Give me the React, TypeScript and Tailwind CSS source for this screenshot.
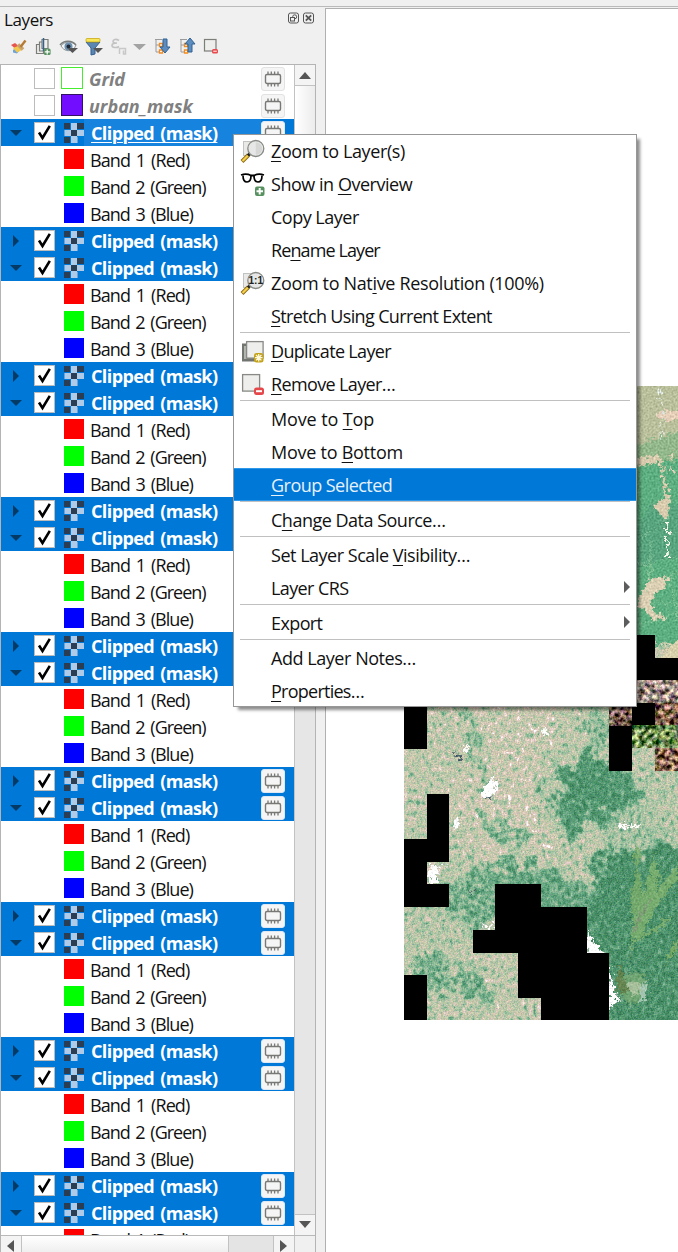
import React from "react";

function MemoryBadge({ plain = false }: { plain?: boolean }) {
  return (
    <span
      className={
        plain
          ? "flex h-6 w-6 items-center justify-center rounded-[3px] border border-[#e2e2e2] bg-[#f5f5f5]"
          : "flex h-6 w-6 items-center justify-center rounded-[3px] border border-[#dce9f5] bg-[#f5f5f5]"
      }
    >
      <svg width="18" height="18" viewBox="0 0 18 18" fill="none" stroke="#777975">
        <rect x="1.5" y="4.5" width="15" height="9" rx="1.5" strokeWidth="1.4" />
        <path d="M4 1.5v3M7.3 1.5v3M10.6 1.5v3M14 1.5v3M4 13.5v3M7.3 13.5v3M10.6 13.5v3M14 13.5v3" strokeWidth="1.3" />
      </svg>
    </span>
  );
}

function RasterIcon() {
  return (
    <svg width="20" height="20" viewBox="0 0 20 20" shapeRendering="crispEdges">
      <path fill="#b0cbe8" d="M7 0h6v7h7v6h-7v7H7v-7H0V7h7z" />
      <path fill="#2b3d53" d="M0 0h6v6H0zM13 0h7v6h-7zM7 7h6v6H7zM0 14h6v6H0z" />
      <path fill="#6aa1df" d="M0 7h1v6H0zM13 14h1v6h-1z" />
    </svg>
  );
}

function CheckBox({ checked = false }: { checked?: boolean }) {
  return (
    <span className="flex h-[21px] w-[21px] items-center justify-center border border-[#bcbcbc] bg-white">
      {checked && (
        <svg width="17" height="17" viewBox="0 0 17 17" fill="none" stroke="#000" strokeWidth="2.6">
          <path d="M3 8.500l3.500 5.500L13.800 1.800" />
        </svg>
      )}
    </span>
  );
}

function LayerRow({ open = false, current = false }: { open?: boolean; current?: boolean }) {
  return (
    <div className="flex h-[27px] shrink-0 items-center bg-[#0078d7] pl-[8px]">
      <svg width="14" height="14" viewBox="0 0 14 14" className="mr-[11px] mb-[2px]" fill="#043a66">
        {open ? <path d="M1 5h12l-6 6z" /> : <path d="M4 2l6 6-6 6z" />}
      </svg>
      <CheckBox checked />
      <span className="ml-[9px]">
        <RasterIcon />
      </span>
      <span className={current ? "flex h-full grow items-center bg-[#1683df] pl-[7px]" : "flex grow items-center pl-[7px]"}>
        <span
          className={
            current
              ? "pt-[2px] whitespace-nowrap text-[18px] leading-[25px] font-bold tracking-[-0.6px] [word-spacing:2px] text-white underline decoration-1 underline-offset-2"
              : "pt-[2px] whitespace-nowrap text-[18px] leading-[25px] font-bold tracking-[-0.6px] [word-spacing:2px] text-white"
          }
        >
          Clipped (mask)
        </span>
      </span>
      <span className="mr-[9px]">
        <MemoryBadge />
      </span>
    </div>
  );
}

const bands = [
  { name: "Band 1 (Red)", swatch: "mb-[1px] h-5 w-5 bg-[#ff0000]", tracking: "tracking-[-0.9px]" },
  { name: "Band 2 (Green)", swatch: "mb-[1px] h-5 w-5 bg-[#00ff00]", tracking: "tracking-[-1px]" },
  { name: "Band 3 (Blue)", swatch: "mb-[1px] h-5 w-5 bg-[#0000ff]", tracking: "tracking-[-0.95px]" },
];

function Bands() {
  return (
    <>
      {bands.map((b) => (
        <div key={b.name} className="flex h-[27px] shrink-0 items-center pl-[63px]">
          <span className={b.swatch} />
          <span className="ml-[6px] text-[18px] leading-6 whitespace-nowrap text-[#111] [word-spacing:2px]">
            <span className={b.tracking}>{b.name}</span>
          </span>
        </div>
      ))}
    </>
  );
}

function VectorRow({ name, swatch }: { name: string; swatch: string }) {
  return (
    <div className="flex h-[27px] shrink-0 items-center pl-[33px]">
      <CheckBox />
      <span className={swatch} />
      <span className="grow pl-[6px] text-[18px] leading-6 font-bold italic text-[#808080]">{name}</span>
      <span className="mr-[9px]">
        <MemoryBadge plain />
      </span>
    </div>
  );
}

function Toolbar() {
  return (
    <div className="flex h-[26px] items-center pl-[9px]">
      <svg width="216" height="20" viewBox="0 0 216 20" fill="none">
        {/* style brush */}
        <path d="M2 8l4-2 5 4-2 4z" fill="#e8554e" />
        <path d="M4 13c2-2 5-2 7 0l-3 3.500-4-1z" fill="#6fa4d8" />
        <path d="M4 11l5-2 4 4-5 2.500z" fill="#f2c94c" />
        <path d="M9 7.500l5 5" stroke="#c9a36b" strokeWidth="3.500" />
        <path d="M11.500 10l5-6.500" stroke="#b57a35" strokeWidth="2.400" />
        {/* add group */}
        <g transform="translate(26 0)" stroke="#7b7d79" strokeWidth="1.2">
          <path d="M1.500 7.500h7v9h-7z" fill="#eeeeec" />
          <path d="M4.500 5h7v9h-7z" fill="#eeeeec" />
          <path d="M7 2.500h6v9H7z" fill="#eeeeec" />
          <path d="M8.500 1v13" stroke="#35618c" strokeWidth="1.500" />
          <rect x="9.500" y="12" width="5.500" height="5.500" rx="1" fill="#5b9464" stroke="#5b9464" />
          <path d="M12.200 12.500v5M9.800 14.900h5" stroke="#fff" />
        </g>
        {/* visibility */}
        <g transform="translate(51 0)">
          <path d="M1 9C5 4 11 4 16 8l-2 4C9 15 4 14 1 9z" fill="#f4f4f4" stroke="#8f9494" />
          <path d="M0 8C4 3 12 3 16 8" stroke="#777c7c" strokeWidth="1.500" />
          <circle cx="8.500" cy="9.500" r="4" fill="#6b8fae" />
          <circle cx="8.500" cy="9.500" r="2" fill="#202a36" />
          <path d="M7 11h11l-5.500 5z" fill="#555" />
        </g>
        {/* filter */}
        <g transform="translate(76 0)">
          <path d="M1 5h14l-5 6v6l-4 1v-7z" fill="#5c86b2" stroke="#335f90" />
          <rect x="1" y="1.500" width="14" height="3.500" rx="1" fill="#f5e65b" stroke="#c4a000" strokeWidth=".7" />
          <path d="M8 11h10l-5 5z" fill="#555" />
        </g>
        {/* expression filter */}
        <path d="M110 3.500c-3-2-6-1-6 .8s2 1.700 4 1.700c-3 0-5 .8-5 2.500 0 2.500 5 2.500 7 1" stroke="#c2c2c2" strokeWidth="1.600" />
        <path d="M110.500 17v-5.500h6V17h-2v-3.500" stroke="#c8c8c8" strokeWidth="1.500" />
        <path d="M124 7h13l-6.500 6z" fill="#a3a3a3" />
        {/* expand all */}
        <g transform="translate(145 0)">
          <path d="M1 2.500h7M2 2v13h5M2 8h5" stroke="#9a9a9a" />
          <path d="M5.500 6.500h3v3h-3zM5.500 13h3v3h-3z" stroke="#f28b1d" strokeWidth="1.300" fill="#fff" />
          <path d="M9 2h4v8h3l-5 6-5-6h3z" fill="#5d8dbe" stroke="#2e6195" />
        </g>
        {/* collapse all */}
        <g transform="translate(170 0)">
          <path d="M1 2.500h7M2 2v13h5M2 8h5" stroke="#9a9a9a" />
          <path d="M5.500 6.500h3v3h-3zM5.500 13h3v3h-3z" stroke="#f28b1d" strokeWidth="1.300" fill="#fff" />
          <path d="M9 15h4V7h3l-5-6-5 6h3z" fill="#5d8dbe" stroke="#2e6195" />
        </g>
        {/* remove */}
        <rect x="195.500" y="2.500" width="11.500" height="11.500" fill="#eeeeec" stroke="#7c7e7a" strokeWidth="1.200" />
        <rect x="203" y="12" width="6" height="4.500" rx="1.500" fill="#e64a4d" />
        <path d="M204.300 14.200h3.500" stroke="#fff" />
      </svg>
    </div>
  );
}

function Magnifier({ ratio = false }: { ratio?: boolean }) {
  return (
    <svg width="25" height="26" viewBox="0 0 25 26">
      <rect x="3.500" y="3.500" width="13" height="14" fill="#e9e9e7" stroke="#c2c3c0" />
      <path d="M8.500 17l-6.500 6.500" stroke="#8b6914" strokeWidth="4" />
      <path d="M8 17.500L2.500 23" stroke="#f3d04d" strokeWidth="2.300" />
      <path d="M10.500 15l-2.500 2.500" stroke="#222" strokeWidth="3" />
      <circle cx="15.800" cy="10.500" r="8" fill="#e6e7e5" fillOpacity=".94" stroke="#888a85" strokeWidth="1.300" />
      {ratio ? (
        <text x="15.800" y="14" textAnchor="middle" fontSize="10" fontWeight="700" fontFamily="Liberation Sans, sans-serif" fill="#222">
          1:1
        </text>
      ) : (
        <path d="M15.800 4.200a6.300 6.300 0 010 12.600z" fill="#d6d7d4" />
      )}
    </svg>
  );
}

function Glasses() {
  return (
    <svg width="25" height="26" viewBox="0 0 25 26" fill="none">
      <path d="M1 4c3-1 7-1 10 .5h3C17 3 21 3 24 4" stroke="#000" strokeWidth="1.800" />
      <path d="M3 4.500c0 4 1 6.500 4 6.500s4-3 4-6.200M14 4.800c0 3.200 1 6.200 4 6.200s4-2.500 4-6.500" stroke="#000" strokeWidth="1.700" />
      <rect x="15" y="15.500" width="9.500" height="9.500" rx="2" fill="#589160" />
      <path d="M19.700 17v6.500M16.500 20.200h6.500" stroke="#fff" strokeWidth="2" />
    </svg>
  );
}

function Duplicate() {
  return (
    <svg width="25" height="26" viewBox="0 0 25 26">
      <rect x="2" y="5.500" width="16" height="18" fill="#72746f" />
      <rect x="4" y="8" width="3" height="13" fill="#b3b5b0" />
      <rect x="6.600" y="3.600" width="16.500" height="16.500" fill="#eeeeec" stroke="#888a85" strokeWidth="1.300" />
      <rect x="14" y="15" width="9.500" height="9.500" rx="2.500" fill="#c4a31b" />
      <path d="M18.700 16v7.500M15 19.700h7.500M16 17l5.400 5.400M21.400 17L16 22.400" stroke="#fff8dd" strokeWidth="1.300" />
    </svg>
  );
}

function Remove() {
  return (
    <svg width="25" height="26" viewBox="0 0 25 26">
      <rect x="2.600" y="3.600" width="17" height="16.500" fill="#eeeeec" stroke="#888a85" strokeWidth="1.300" />
      <rect x="14" y="16.500" width="10" height="7.500" rx="2.500" fill="#e5484b" />
      <path d="M16 20.200h6" stroke="#fff" strokeWidth="2" />
    </svg>
  );
}

type Entry =
  | { sep: true }
  | { sep?: false; a: string; u: string; b: string; t: string; icon?: React.ReactNode; active?: boolean; sub?: boolean };

const entries: Entry[] = [
  { a: "", u: "Z", b: "oom to Layer(s)", t: "tracking-[-0.4px]", icon: <Magnifier /> },
  { a: "Show in ", u: "O", b: "verview", t: "tracking-[-0.47px]", icon: <Glasses /> },
  { a: "Copy Layer", u: "", b: "", t: "tracking-[-0.5px]" },
  { a: "Re", u: "n", b: "ame Layer", t: "tracking-[-0.9px]" },
  { a: "Zoom to Nat", u: "i", b: "ve Resolution (100%)", t: "tracking-[-0.34px]", icon: <Magnifier ratio /> },
  { a: "", u: "S", b: "tretch Using Current Extent", t: "tracking-[-0.65px]" },
  { sep: true },
  { a: "", u: "D", b: "uplicate Layer", t: "tracking-[-0.67px]", icon: <Duplicate /> },
  { a: "", u: "R", b: "emove Layer…", t: "tracking-[-0.63px]", icon: <Remove /> },
  { sep: true },
  { a: "Move to ", u: "T", b: "op", t: "tracking-[-0.13px]" },
  { a: "Move to ", u: "B", b: "ottom", t: "tracking-[-0.26px]" },
  { a: "", u: "G", b: "roup Selected", t: "tracking-[-0.54px]", active: true },
  { sep: true },
  { a: "C", u: "h", b: "ange Data Source…", t: "tracking-[-0.5px]" },
  { sep: true },
  { a: "Set Layer Scale ", u: "V", b: "isibility…", t: "tracking-[-0.48px]" },
  { a: "Layer CRS", u: "", b: "", t: "tracking-[-0.6px]", sub: true },
  { sep: true },
  { a: "Export", u: "", b: "", t: "tracking-[-0.6px]", sub: true },
  { sep: true },
  { a: "Add Layer Notes…", u: "", b: "", t: "tracking-[-0.45px]" },
  { a: "", u: "P", b: "roperties…", t: "tracking-[-0.75px]" },
];

function ContextMenu() {
  return (
    <div className="absolute top-[134px] left-[233px] h-[573px] w-[404px] border border-[#979797] bg-white shadow-[4px_4px_3px_-1px_rgba(0,0,0,0.45)]">
      <div className="-mt-px flex flex-col">
        {entries.map((e, i) =>
          e.sep ? (
            <div key={i} className="mx-[6px] h-[2px] border-t border-[#c0c0c0]" />
          ) : (
            <div
              key={i}
              className={
                e.active
                  ? "flex h-[33px] items-center border-y border-[#2d97ea] bg-[#0078d7] pl-[6px] text-[#e6f1fb]"
                  : "flex h-[33px] items-center pl-[6px] text-[#111]"
              }
            >
              <span className="flex w-[31px] justify-start">{e.icon}</span>
              <span className="grow text-[18px] leading-7 whitespace-nowrap">
                <span className={e.t}>
                  {e.a}
                  <span className="underline decoration-1 underline-offset-[3px]">{e.u}</span>
                  {e.b}
                </span>
              </span>
              {e.sub && (
                <svg width="6" height="12" viewBox="0 0 6 12" className="mr-[6px] mb-[2px]">
                  <path d="M0 0l6 6-6 6z" fill="#5d5d5d" />
                </svg>
              )}
            </div>
          ),
        )}
      </div>
    </div>
  );
}

function SatelliteMosaic() {
  return (
    <svg className="absolute top-[386px] left-[404px]" width="274" height="634" viewBox="404 386 274 634">
      <defs>
        {/* grey value = dryness; noise is added and the sum is mapped to a forest-to-bare-soil ramp */}
        <filter id="land" filterUnits="userSpaceOnUse" x="344" y="600" width="394" height="490" colorInterpolationFilters="sRGB">
          <feGaussianBlur in="SourceGraphic" stdDeviation="3" result="soft" />
          <feTurbulence type="fractalNoise" baseFrequency="0.06" numOctaves="5" seed="8" result="t1" />
          <feDisplacementMap in="soft" in2="t1" scale="50" xChannelSelector="R" yChannelSelector="G" result="d" />
          <feTurbulence type="fractalNoise" baseFrequency="0.24 0.18" numOctaves="3" seed="31" result="t2" />
          <feColorMatrix in="t2" type="matrix" values="1 1 0 0 -.5  1 1 0 0 -.5  1 1 0 0 -.5  0 0 0 0 1" result="n" />
          <feComposite in="d" in2="n" operator="arithmetic" k1=".7" k2=".65" k3=".35" k4="-.17" result="v" />
          <feComponentTransfer in="v" result="base">
            <feFuncR type="table" tableValues=".24 .31 .42 .59 .7 .77 .83 .9 1" />
            <feFuncG type="table" tableValues=".51 .58 .66 .74 .77 .78 .77 .82 1" />
            <feFuncB type="table" tableValues=".36 .43 .52 .61 .65 .67 .7 .79 1" />
          </feComponentTransfer>
          <feTurbulence type="fractalNoise" baseFrequency="0.7" numOctaves="2" seed="5" result="t3" />
          <feColorMatrix in="t3" type="matrix" values="1 0 0 0 0  .6 .4 0 0 0  .6 0 .4 0 0  0 0 0 0 1" result="g" />
          <feComposite in="base" in2="g" operator="arithmetic" k1="0" k2="1" k3=".4" k4="-.19" />
        </filter>
        <filter id="field" filterUnits="userSpaceOnUse" x="404" y="386" width="294" height="634" colorInterpolationFilters="sRGB">
          <feTurbulence type="fractalNoise" baseFrequency="0.22" numOctaves="3" seed="4" result="n1" />
          <feDisplacementMap in="SourceGraphic" in2="n1" scale="12" xChannelSelector="R" yChannelSelector="G" result="d" />
          <feTurbulence type="fractalNoise" baseFrequency="0.5" numOctaves="2" seed="9" result="n3" />
          <feColorMatrix in="n3" type="matrix" values="1 0 0 0 0  1 0 0 0 0  1 0 0 0 0  0 0 0 0 1" result="g" />
          <feComposite in="d" in2="g" operator="arithmetic" k1="0" k2="1" k3=".3" k4="-.14" result="s" />
          <feComposite in="s" in2="d" operator="in" />
        </filter>
        <filter id="town" filterUnits="userSpaceOnUse" x="600" y="670" width="78" height="110" colorInterpolationFilters="sRGB">
          <feTurbulence type="fractalNoise" baseFrequency="0.2" numOctaves="4" seed="12" result="n" />
          <feColorMatrix in="n" type="matrix" values="2 .3 0 0 -.65  1.600 .7 0 0 -.65  1.500 .3 .5 0 -.65  0 0 0 0 1" result="m" />
          <feComposite in="SourceGraphic" in2="m" operator="arithmetic" k1="0" k2="1" k3=".9" k4="-.45" result="s" />
          <feComposite in="s" in2="SourceGraphic" operator="in" />
        </filter>
      </defs>
      <g filter="url(#land)">
        <rect x="324" y="580" width="434" height="530" fill="#8c8c8c" />
        <path d="M435 700h130l-20 60-30 60-60 0-30-60z" fill="#a0a0a0" />
        <path d="M470 800l60-20 20 60-10 30-50-10-20-30z" fill="#a6a6a6" />
        <path d="M404 707h60v60l-20 30h-40z" fill="#909090" />
        <path d="M404 870h60l20 60-40 20H404z" fill="#808080" />
        <path d="M566 757l20-6 30 15 24 20-6 40-40 0-22-20-18-18z" fill="#202020" />
        <path d="M590 715l20-4 0 40-20 0z" fill="#505050" />
        <path d="M543 792l30 5 15 25-15 18-20-20z" fill="#282828" />
        <path d="M580 798l50 5-10 25-40-5z" fill="#202020" />
        <path d="M636 770h80v50l-60 20-20 -20z" fill="#808080" />
        <path d="M600 845l50-10 90 0v250H585l0-160z" fill="#181818" />
        <path d="M610 810l40 0 20 30-60 20z" fill="#6c6c6c" />
        <path d="M480 862l50 0 60 20v50l-100 0z" fill="#383838" />
        <path d="M440 885l50-15 20 60-60-10z" fill="#454545" />
        <path d="M410 955l60 15 50 30v20l-50-20-65-15z" fill="#454545" />
        <path d="M460 700l10 0 15 70 10 30-20-20z" fill="#484848" />
        <path d="M474 806l45 24 20 25-30-10-35-29z" fill="#484848" />
        <path d="M510 965l30 60h-60l10-40z" fill="#909090" />
      </g>
      <g filter="url(#field)">
        <path d="M485 785l6-8 5 6-1 12-9 5-5-6zM452 822l6-4 2 8-6 4zM430 866l18-1-10 4-1 15h-9z" fill="#fff" />
        <path d="M540 730l6-5 3 5-4 6zM462 747l8-4 1 6-8 3zM618 824l10 2 14-3-3 4-20 2zM480 927l15-5v7z" fill="#f9f9f4" />
        <path d="M487 796l5 1-1 3-6-1zM453 754l10 1-2 4-6-1zM470 890l6 2-4 2z" fill="#49606a" />
      </g>
      <g filter="url(#field)">
        <path d="M625 370h73v274h-73z" fill="#5aab7d" />
        <path d="M625 370h73v78h-73z" fill="#b6bd98" />
        <path d="M625 448l73-22v30l-73 13z" fill="#8fb588" />
        <path d="M650 505h43v50l-61 12v-30z" fill="#55a27c" />
        <path d="M639 457l21-1 3 14 5 22 2 25-6 0-11-11 8-7 4 0-2-14-3-22-21 2z" fill="#d6c9ab" />
        <path d="M655 414l12-4 15 1v7l-14 3-10-2zM668 455l7-3-3 8zM672 468l4 2-7 3z" fill="#e2ccb5" />
        <path d="M667 520v14M667 538v18" stroke="#eef0e2" strokeWidth="2" fill="none" />
        <path d="M637 542l32-25M650 540v70M637 565l41-8M642 610l10-45M660 580l18-8M640 625l38-12M670 575l8 45M637 603h41" stroke="#8fc79b" strokeWidth=".8" fill="none" />
        <path d="M638 600l10-18 19-7v10l-12 8-5 10 5 9 13 5-16 3-5-10-9-3z" fill="#d8cdb1" />
        <path d="M659 658l10-12 12-7h12v22h-34z" fill="#d5ccaa" />
        <path d="M659 390l4 20-2 20 2 12" stroke="#dde6e4" strokeWidth="1.500" fill="none" strokeDasharray="4 3" />
      </g>
      <g filter="url(#field)" opacity=".7">
        <path d="M634 845l8 5-4 20 8 28-14 20-2-26 6-20z" fill="#7fae68" />
        <path d="M632 920l14-30 6-38 8 20-4 20 22-27v14l-24 32-12 24 30-20-10 14-28 13-4 18z" fill="#86b56e" />
        <path d="M633 932l6-19 14-19-9 20-10 20z" fill="#8f9b78" />
        <path d="M680 938l-4 12-12 16 8-20z" fill="#83b062" />
        <ellipse cx="634" cy="988" rx="14" ry="16" fill="#7cab74" />
        <path d="M616 970l6-3 2 13 5 12-12-2z" fill="#6b7b40" />
        <ellipse cx="635" cy="988" rx="9" ry="6" fill="#c8cfac" />
        <path d="M645 980q6 10-1 22l-5 0 3-13z" fill="#c6d9ce" />
      </g>
      <g filter="url(#field)">
        <path d="M588 930l4 10 6 4 0 5 12 6-24 2zM609 960l5 28 6 14-9 4-4 10z" fill="#fff" />
      </g>
      <g filter="url(#town)">
        <path d="M637 680h41v23h-41z" fill="#9b8a82" />
        <path d="M609 703h23v23h-23z" fill="#6b5249" />
        <path d="M655 703h23v22h-23zM655 748h23v23h-23z" fill="#85644f" />
        <path d="M632 725h46v23h-46z" fill="#6c8a52" />
      </g>
      <path
        fill="#000"
        shapeRendering="crispEdges"
        d="M404 707h23v42h-23zM427 794h22v68h-22v22h22v23h-45v-68h23zM404 975h23v45h-23zM495 884h46v23h46v46h22v67h-68v-22h-23v-45h-45v-23h22zM609 726h23v45h-23zM632 703h23v22h-23zM637 635h18v23h23v22h-41z"
      />
    </svg>
  );
}

export default function App() {
  return (
    <div className="relative flex h-[1252px] w-[678px] flex-col overflow-hidden bg-[#f0f0f0] font-['Open_Sans','Noto_Sans',sans-serif]">
      <div className="h-[7px] shrink-0 border-b border-[#bababa]" />
      <div className="flex min-h-0 grow">
        <aside className="flex w-[316px] shrink-0 flex-col">
          <div className="flex h-[27px] items-center pl-[4px]">
            <span className="grow text-[17px] leading-6 tracking-[-0.4px] text-[#111]">Layers</span>
            <svg width="29" height="14" viewBox="0 0 28 14" fill="none" stroke="#555" className="mb-[3px]">
              <rect x="1" y="2" width="10" height="10" rx="2" />
              <circle cx="7.200" cy="5.800" r="2" />
              <rect x="3" y="6.500" width="4" height="3.500" fill="#f0f0f0" />
              <rect x="16" y="2" width="10" height="10" rx="2" />
              <path d="M18.300 4.300l5.400 5.400M23.700 4.300l-5.400 5.400" strokeWidth="1.800" />
            </svg>
          </div>
          <div className="pt-[2px]">
            <Toolbar />
          </div>
          <div className="mt-[2px] flex min-h-0 grow flex-col pt-[2px]">
            <div className="flex min-h-0 grow flex-col border-x border-t border-[#b4b4b4] bg-white">
              <div className="flex min-h-0 grow">
                <div className="flex w-[293px] flex-col overflow-hidden bg-white">
                  <VectorRow name="Grid" swatch="ml-[6px] mb-[2px] h-[22px] w-[22px] border border-[#46ec2e] bg-white" />
                  <VectorRow name="urban_mask" swatch="ml-[6px] mb-[2px] h-[22px] w-[22px] border border-[#321363] bg-[#730dff]" />
                  {Array.from({ length: 9 }, (_, i) => (
                    <React.Fragment key={i}>
                      {i > 0 && <LayerRow />}
                      <LayerRow open current={i === 0} />
                      <Bands />
                    </React.Fragment>
                  ))}
                </div>
                <div className="flex w-[21px] flex-col border-l border-[#c2c2c2] bg-[#e6e6e6]">
                  <span className="flex h-[21px] shrink-0 items-center justify-center border-b border-[#c2c2c2] bg-[#f4f4f4] pr-px">
                    <svg width="12" height="7" viewBox="0 0 12 7"><path d="M0 7l6-7 6 7z" fill="#555" /></svg>
                  </span>
                  <span className="h-[560px] shrink-0 border-b border-[#c2c2c2] bg-linear-to-r from-white to-[#ececec]" />
                  <span className="grow" />
                  <span className="flex h-[21px] shrink-0 items-center justify-center border-t border-[#c2c2c2] bg-[#f4f4f4] pr-px pb-[2px]">
                    <svg width="12" height="7" viewBox="0 0 12 7"><path d="M0 0l6 7 6-7z" fill="#555" /></svg>
                  </span>
                </div>
              </div>
              <div className="flex h-[17px] shrink-0 border-t border-[#b9b9b9] bg-[#e4e4e4]">
                <span className="flex w-[21px] items-center justify-center border-r border-[#c2c2c2] bg-[#f4f4f4] pt-[3px] pr-px">
                  <svg width="7" height="12" viewBox="0 0 7 12"><path d="M7 0L0 6l7 6z" fill="#555" /></svg>
                </span>
                <span className="w-[207px] border-r border-[#c2c2c2] bg-linear-to-b from-white to-[#efefef]" />
                <span className="grow" />
                <span className="flex w-[21px] items-center justify-center border-l border-[#c2c2c2] bg-[#f4f4f4] pt-[3px] pr-px">
                  <svg width="7" height="12" viewBox="0 0 7 12"><path d="M0 0l7 6-7 6z" fill="#555" /></svg>
                </span>
                <span className="w-[21px] border-l border-[#c2c2c2] bg-[#f0f0f0]" />
              </div>
            </div>
          </div>
        </aside>
        <main className="mt-px ml-[9px] grow border-t border-l border-[#b0b0b0] bg-white" />
      </div>
      <SatelliteMosaic />
      <ContextMenu />
    </div>
  );
}
